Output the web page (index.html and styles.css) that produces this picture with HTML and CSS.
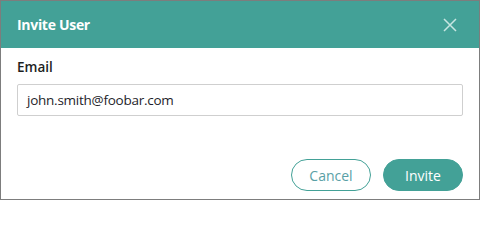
FILE: index.html
```html
<!DOCTYPE html>
<html>
<head>
<meta charset="utf-8">
<link rel="stylesheet" href="styles.css">
</head>
<body>
<div class="dialog">
  <div class="header">
    <span class="title">Invite User</span>
    <button class="close" aria-label="Close">
      <svg width="14" height="14" viewBox="0 0 14 14"><path d="M1 1L13 13M13 1L1 13" stroke="currentColor" stroke-width="1.5" fill="none"/></svg>
    </button>
  </div>
  <div class="content">
    <label class="label">Email</label>
    <div class="input">john.smith@foobar.com</div>
  </div>
  <div class="footer">
    <button class="btn btn-outline">Cancel</button>
    <button class="btn btn-primary">Invite</button>
  </div>
</div>
</body>
</html>
```

FILE: styles.css
```css
html, body {
  margin: 0;
  padding: 0;
  background: #fff;
}
.dialog {
  width: 480px;
  height: 200px;
  box-sizing: border-box;
  border: 1px solid #7d7d7d;
  display: flex;
  flex-direction: column;
  font-family: "Open Sans", "Noto Sans", sans-serif;
  color: #222;
}
.header {
  height: 47px;
  background: #43a197;
  display: flex;
  align-items: center;
  justify-content: space-between;
  padding: 0 16px;
}
.title {
  color: #fff;
  font-weight: 700;
  font-size: 14px;
  letter-spacing: -0.3px;
}
.close {
  background: none;
  border: 0;
  padding: 0;
  margin-right: 6px;
  color: #c8e6e2;
  display: flex;
}
.content {
  padding: 9px 16px 0 16px;
  display: flex;
  flex-direction: column;
}
.label {
  font-size: 13.5px;
  font-weight: 600;
  line-height: 20px;
  color: #1e1e1e;
  margin-bottom: 7px;
}
.input {
  height: 32px;
  box-sizing: border-box;
  border: 1px solid #cfcfcf;
  border-radius: 2px;
  padding: 0 9px;
  font-size: 13.5px;
  letter-spacing: -0.25px;
  line-height: 30px;
  color: #1e1e2a;
}
.footer {
  margin-top: auto;
  display: flex;
  justify-content: flex-end;
  gap: 12px;
  padding: 0 16px 8px 16px;
}
.btn {
  width: 80px;
  height: 32px;
  border-radius: 16px;
  font-family: inherit;
  font-size: 14px;
  box-sizing: border-box;
  padding: 0;
}
.btn-outline {
  background: #fff;
  border: 1px solid #43a197;
  color: #5a9fa6;
}
.btn-primary {
  background: #43a197;
  border: 1px solid #43a197;
  color: #fff;
}
```
